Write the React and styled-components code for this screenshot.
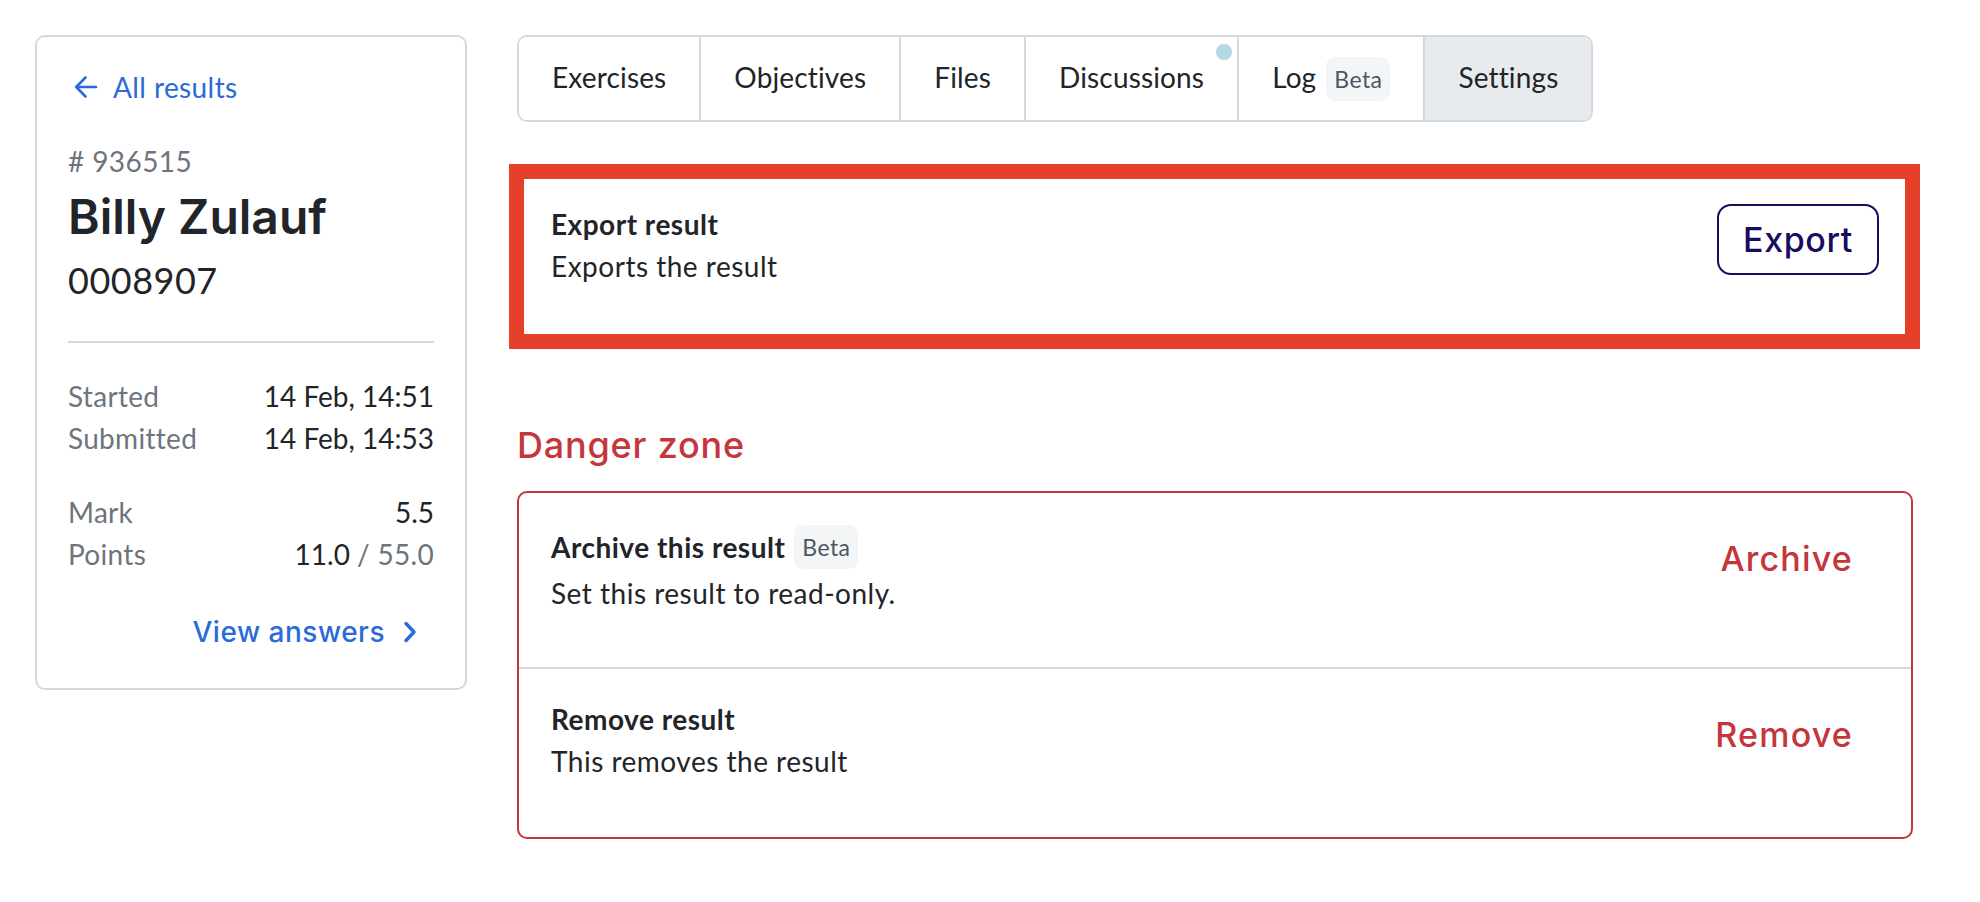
import React from 'react';
import styled, { createGlobalStyle } from 'styled-components';

const colors = {
  text: '#212529',
  muted: '#6c757d',
  border: '#d5d9de',
  blue: '#2a6ad9',
  danger: '#c4363c',
  navy: '#170c5f',
  highlight: '#e5412a',
  activeTab: '#e8ebee',
  badgeBg: '#f4f5f7',
  badgeText: '#4b5563',
  dot: '#b6d8e5',
};

const bodyFont = `'Lato', 'Noto Sans', sans-serif`;
const headFont = `'Inter', 'Noto Sans', sans-serif`;

const GlobalStyle = createGlobalStyle`
  html, body {
    margin: 0;
    background: #fff;
  }
  body {
    font-family: ${bodyFont};
    color: ${colors.text};
    -webkit-font-smoothing: antialiased;
  }
  * { box-sizing: border-box; }
`;

const tabs = [
  { label: 'Exercises' },
  { label: 'Objectives' },
  { label: 'Files' },
  { label: 'Discussions', dot: true },
  { label: 'Log', badge: 'Beta' },
  { label: 'Settings', active: true },
];

const ArrowLeft = () => (
  <svg width="24" height="24" viewBox="0 0 24 24" fill="none" stroke="currentColor" strokeWidth="2.6" strokeLinecap="round" strokeLinejoin="round">
    <path d="M22 12H2.5" />
    <path d="M11.5 2.5 2.2 12l9.3 9.5" />
  </svg>
);

const Chevron = () => (
  <svg width="14" height="22" viewBox="0 0 14 22" fill="none" stroke="currentColor" strokeWidth="3.4" strokeLinecap="round" strokeLinejoin="round">
    <path d="M3 2.5 11 11l-8 8.5" />
  </svg>
);

/**
 * Result settings page
 */
const App = () => (
  <>
    <GlobalStyle />
    <Page>
      <Sidebar>
        <BackLink href="#results">
          <ArrowLeft />
          All results
        </BackLink>
        <ResultId># 936515</ResultId>
        <Name>Billy Zulauf</Name>
        <StudentNumber>0008907</StudentNumber>
        <Divider />
        <InfoGroup>
          <InfoRow>
            <Label>Started</Label>
            <Value>14 Feb, 14:51</Value>
          </InfoRow>
          <InfoRow>
            <Label>Submitted</Label>
            <Value>14 Feb, 14:53</Value>
          </InfoRow>
        </InfoGroup>
        <InfoGroup>
          <InfoRow>
            <Label>Mark</Label>
            <Value>5.5</Value>
          </InfoRow>
          <InfoRow>
            <Label>Points</Label>
            <Value>
              11.0 <Label>/ 55.0</Label>
            </Value>
          </InfoRow>
        </InfoGroup>
        <ViewAnswers href="#answers">
          View answers
          <Chevron />
        </ViewAnswers>
      </Sidebar>

      <Main>
        <Tabs>
          {tabs.map((tab) => (
            <Tab key={tab.label} $active={tab.active}>
              {tab.label}
              {tab.badge && <TabBadge>{tab.badge}</TabBadge>}
              {tab.dot && <Dot />}
            </Tab>
          ))}
        </Tabs>

        <Highlight>
          <Panel>
            <Row>
              <RowText>
                <RowTitle>Export result</RowTitle>
                <RowDesc>Exports the result</RowDesc>
              </RowText>
              <Button $variant="outline">Export</Button>
            </Row>
          </Panel>
        </Highlight>

        <DangerTitle>Danger zone</DangerTitle>
        <Panel $danger>
          <Row>
            <RowText>
              <RowTitle>
                Archive this result
                <TitleBadge>Beta</TitleBadge>
              </RowTitle>
              <RowDesc>Set this result to read-only.</RowDesc>
            </RowText>
            <Button $variant="danger">Archive</Button>
          </Row>
          <Row>
            <RowText>
              <RowTitle>Remove result</RowTitle>
              <RowDesc>This removes the result</RowDesc>
            </RowText>
            <Button $variant="danger">Remove</Button>
          </Row>
        </Panel>
      </Main>
    </Page>
  </>
);

const Page = styled.div`
  display: grid;
  grid-template-columns: 432px 1396px;
  gap: 50px;
  align-items: start;
  padding: 35px;
`;

const Sidebar = styled.aside`
  display: flex;
  flex-direction: column;
  padding: 29px 31px 35px;
  border: 2px solid ${colors.border};
  border-radius: 10px;
  font-size: 28px;
  line-height: 42px;
`;

const BackLink = styled.a`
  display: flex;
  align-items: center;
  gap: 15px;
  padding-left: 6px;
  color: ${colors.blue};
  text-decoration: none;
  letter-spacing: 0.4px;
`;

const ResultId = styled.div`
  margin-top: 32px;
  color: ${colors.muted};
  letter-spacing: 0.4px;
`;

const Name = styled.h1`
  margin: 6px 0 0;
  font-family: ${headFont};
  font-weight: 600;
  font-size: 48px;
  line-height: 58px;
  letter-spacing: 0;
  color: ${colors.text};
`;

const StudentNumber = styled.div`
  margin-top: 7px;
  font-size: 36px;
  line-height: 54px;
  letter-spacing: 0.5px;
`;

const Divider = styled.hr`
  width: 100%;
  margin: 34px 0 32px;
  border: 0;
  border-top: 2px solid ${colors.border};
`;

const InfoGroup = styled.div`
  display: flex;
  flex-direction: column;

  & + & {
    margin-top: 32px;
  }
`;

const InfoRow = styled.div`
  display: flex;
  justify-content: space-between;
`;

const Label = styled.span`
  color: ${colors.muted};
  letter-spacing: 0.3px;
`;

const Value = styled.span`
  color: ${colors.text};
`;

const ViewAnswers = styled.a`
  display: flex;
  align-items: center;
  gap: 18px;
  align-self: flex-end;
  margin-top: 36px;
  padding-right: 17px;
  font-family: ${headFont};
  font-weight: 500;
  font-size: 28px;
  line-height: 42px;
  letter-spacing: 0.5px;
  color: ${colors.blue};
  text-decoration: none;
`;

const Main = styled.main`
  display: flex;
  flex-direction: column;
  align-items: flex-start;
`;

const Tabs = styled.nav`
  display: inline-flex;
  border: 2px solid ${colors.border};
  border-radius: 10px;
  overflow: hidden;
`;

const Tab = styled.div`
  position: relative;
  display: flex;
  align-items: center;
  height: 83px;
  padding: 0 33px 3px;
  font-size: 28px;
  line-height: 42px;
  letter-spacing: 0.15px;
  color: ${colors.text};
  background: ${({ $active }) => ($active ? colors.activeTab : '#fff')};

  & + & {
    border-left: 2px solid ${colors.border};
  }
`;

const Badge = styled.span`
  display: inline-block;
  padding: 5px 8px;
  border-radius: 9px;
  background: ${colors.badgeBg};
  color: ${colors.badgeText};
  font-family: ${bodyFont};
  font-weight: 400;
  font-size: 23px;
  line-height: 34px;
  letter-spacing: 0.4px;
`;

const TabBadge = styled(Badge)`
  margin: 3px 0 0 10px;
`;

const TitleBadge = styled(Badge)`
  margin: 3px 0 3px 9px;
`;

const Dot = styled.span`
  position: absolute;
  top: 7px;
  right: 5px;
  width: 16px;
  height: 16px;
  border-radius: 50%;
  background: ${colors.dot};
`;

const Highlight = styled.div`
  position: relative;
  width: 100%;
  margin-top: 50px;

  &::after {
    content: '';
    position: absolute;
    inset: -8px -7px -7px -8px;
    border: 15px solid ${colors.highlight};
    pointer-events: none;
  }
`;

const Panel = styled.section`
  width: 100%;
  border: 2px solid ${({ $danger }) => ($danger ? colors.danger : colors.border)};
  border-radius: 10px;
  background: #fff;
`;

const Row = styled.div`
  display: flex;
  justify-content: space-between;
  align-items: flex-start;
  padding: 29px 32px 53px;

  & + & {
    border-top: 2px solid ${colors.border};
    padding-bottom: 55px;
  }
`;

const RowText = styled.div`
  display: flex;
  flex-direction: column;
  font-size: 28px;
  line-height: 42px;
`;

const RowTitle = styled.div`
  display: flex;
  align-items: center;
  font-weight: 700;
  letter-spacing: 0.5px;
`;

const RowDesc = styled.div`
  letter-spacing: 0.5px;
`;

const Button = styled.button`
  margin-top: 1px;
  padding: 8px 24px;
  border: 2px solid ${({ $variant }) => ($variant === 'outline' ? colors.navy : 'transparent')};
  border-radius: 14px;
  background: transparent;
  color: ${({ $variant }) => ($variant === 'outline' ? colors.navy : colors.danger)};
  font-family: ${headFont};
  font-weight: 500;
  font-size: 34px;
  line-height: 51px;
  letter-spacing: ${({ $variant }) => ($variant === 'outline' ? '0.6px' : '1.2px')};
  cursor: pointer;
`;

const DangerTitle = styled.h2`
  margin: 82px 0 24px;
  font-family: ${headFont};
  font-weight: 500;
  font-size: 36px;
  line-height: 43px;
  letter-spacing: 0.8px;
  color: ${colors.danger};
`;

export default App;
